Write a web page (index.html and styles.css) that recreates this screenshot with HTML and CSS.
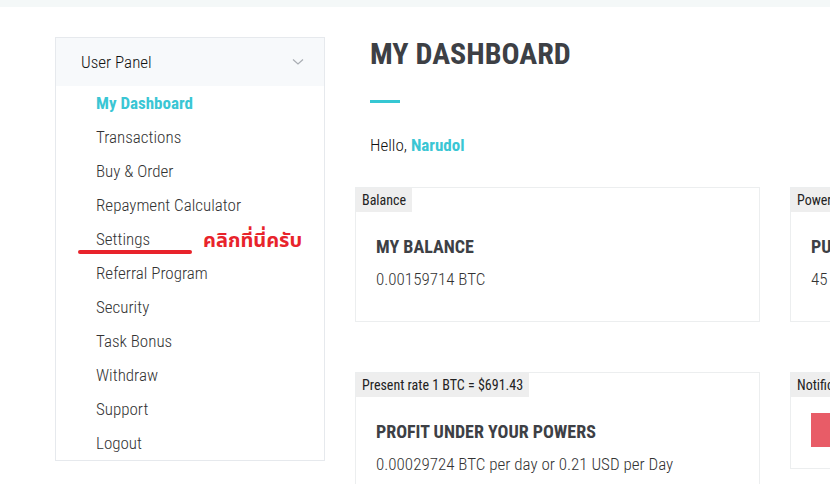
FILE: index.html
```html
<!DOCTYPE html>
<html>
<head>
    <meta charset="UTF-8">
    <title>My Dashboard</title>
    <link rel="stylesheet" href="styles.css">
</head>
<body>
    <div class="topbar"></div>

    <div class="page">
        <div class="sidebar">
            <div class="panel-head">
                <span>User Panel</span>
                <svg class="chevron" width="12" height="8" viewBox="0 0 12 8">
                    <path d="M1 1.5 L6 6 L11 1.5" fill="none" stroke="#a9adb3" stroke-width="1.2"/>
                </svg>
            </div>
            <ul class="menu">
                <li class="active">My Dashboard</li>
                <li>Transactions</li>
                <li>Buy &amp; Order</li>
                <li>Repayment Calculator</li>
                <li>Settings</li>
                <li>Referral Program</li>
                <li>Security</li>
                <li>Task Bonus</li>
                <li>Withdraw</li>
                <li>Support</li>
                <li>Logout</li>
            </ul>
            <div class="mark-line"></div>
            <div class="mark-text">คลิกที่นี่ครับ</div>
        </div>

        <div class="main">
            <h1>MY DASHBOARD</h1>
            <div class="accent"></div>
            <p class="hello">Hello, <b>Narudol</b></p>

            <div class="cards">
                <div class="card">
                    <div class="tab">Balance</div>
                    <div class="card-body">
                        <h3>MY BALANCE</h3>
                        <p>0.00159714 BTC</p>
                    </div>
                </div>
                <div class="card">
                    <div class="tab">Powers</div>
                    <div class="card-body">
                        <h3>PURCHASED POWERS</h3>
                        <p>45 GH/s</p>
                    </div>
                </div>
                <div class="card">
                    <div class="tab">Present rate 1 BTC = $691.43</div>
                    <div class="card-body">
                        <h3>PROFIT UNDER YOUR POWERS</h3>
                        <p>0.00029724 BTC per day or 0.21 USD per Day</p>
                    </div>
                </div>
                <div class="card">
                    <div class="tab">Notifications</div>
                    <div class="card-body short">
                        <div class="alert"></div>
                    </div>
                </div>
            </div>
        </div>
    </div>
</body>
</html>
```

FILE: styles.css
```css
body {
    margin: 0;
    font-family: Roboto, "Noto Sans", sans-serif;
    font-stretch: condensed;
    color: #333;
    background-color: #fff;
    overflow: hidden;
}

.topbar {
    height: 7px;
    background-color: #f4f8f8;
}

.page {
    display: flex;
    gap: 30px;
    padding: 30px 0 0 55px;
}

.sidebar {
    position: relative;
    flex: 0 0 268px;
    align-self: flex-start;
    border: 1px solid #e6e9ed;
}

.panel-head {
    display: flex;
    justify-content: space-between;
    align-items: center;
    height: 48px;
    padding: 0 20px 0 25px;
    background-color: #f7f9fb;
    font-size: 17px;
    font-weight: 300;
    color: #111;
}

.menu {
    list-style: none;
    margin: 0;
    padding: 0 0 0 40px;
}

.menu li {
    line-height: 34px;
    font-size: 17px;
    font-weight: 300;
    color: #333;
}

.menu li.active {
    color: #3ac6d4;
    font-weight: bold;
}

/* red hand-drawn hint over the menu */
.mark-line {
    position: absolute;
    left: 22px;
    top: 212px;
    width: 114px;
    height: 4px;
    border-radius: 2px;
    background-color: #e8232b;
}

.mark-text {
    position: absolute;
    left: 147px;
    top: 191px;
    font-family: "Noto Sans Thai", "Noto Sans", "DejaVu Sans", sans-serif;
    font-stretch: normal;
    font-size: 20px;
    line-height: 24px;
    font-weight: bold;
    color: #e8232b;
}

.main {
    flex: 1;
    min-width: 0;
}

h1 {
    margin: 0 0 0 15px;
    font-size: 30px;
    line-height: 34px;
    color: #3d4045;
}

.accent {
    width: 30px;
    height: 3px;
    margin: 29px 0 0 15px;
    background-color: #35c7d3;
}

.hello {
    margin: 32px 0 0 15px;
    font-size: 17px;
    line-height: 20px;
    font-weight: 300;
    color: #111;
}

.hello b {
    font-weight: bold;
    color: #3ac6d4;
}

.cards {
    display: grid;
    grid-template-columns: 405px 405px;
    gap: 50px 30px;
    align-items: start;
    margin-top: 32px;
}

.card {
    border: 1px solid #eceeef;
}

.tab {
    display: inline-block;
    padding: 0 6px;
    line-height: 24px;
    font-size: 14px;
    color: #222;
    background-color: #eee;
}

.card-body {
    padding: 24px 20px 31px;
}

.card-body.short {
    padding: 16px 20px 21px;
}

.card h3 {
    margin: 0 0 10px;
    font-size: 18px;
    line-height: 22px;
    color: #3d4045;
}

.card p {
    margin: 0;
    font-size: 17px;
    line-height: 22px;
    font-weight: 300;
    color: #333;
}

.alert {
    height: 34px;
    background-color: #e85c67;
}
```
